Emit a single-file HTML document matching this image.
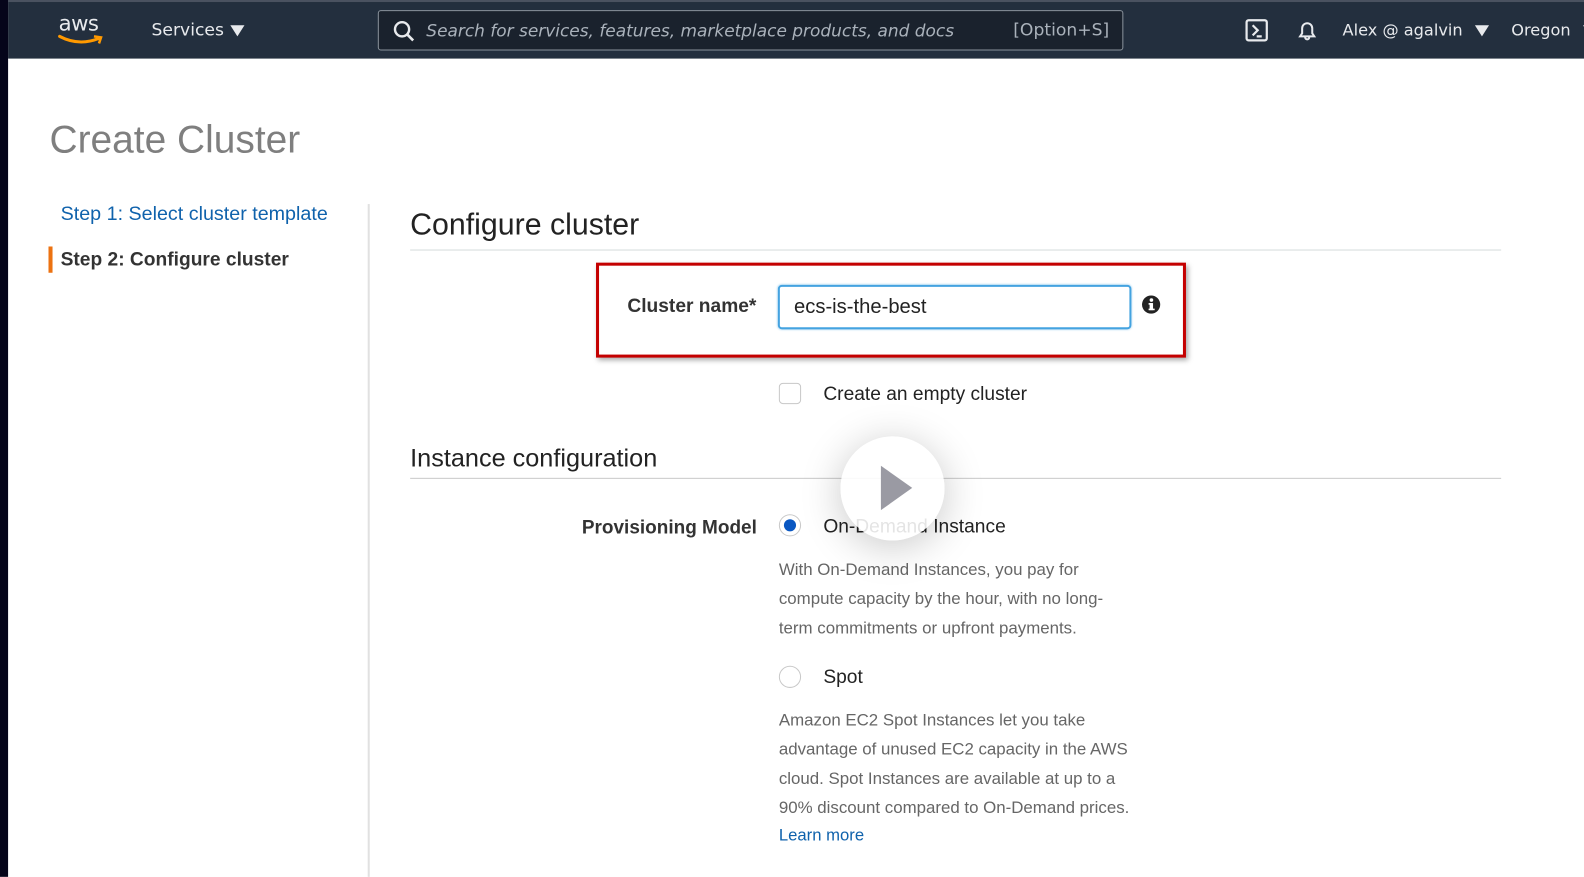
<!DOCTYPE html>
<html><head><meta charset="utf-8"><style>
*{margin:0;padding:0;box-sizing:border-box}
body{width:1584px;height:868px;overflow:hidden;background:#fff;font-family:"Liberation Sans",Arial,sans-serif;position:relative;color:#16191f}
#w{position:absolute;left:0;top:0;width:1568px;height:860px;transform:scale(1.0102);transform-origin:0 0}
.a{position:absolute;white-space:nowrap}
#strip{left:0;top:0;width:8px;height:868px;background:#05051a}
#hdr{left:8px;top:0;width:1576px;height:58px;background:#232f3e;border-top:2px solid #4a5260}
.hw{color:#e8eaed;font-family:"DejaVu Sans",sans-serif;font-size:17px}
.tri{display:inline-block;width:0;height:0;border-left:7px solid transparent;border-right:7px solid transparent;border-top:11px solid #e8eaed;vertical-align:middle;margin-left:6px}
.gray{color:#666;font-size:16.7px;line-height:29px}
.rule{height:1px;background:#d5dbdb}
</style></head><body><div id="w">
<div class="a" id="strip"></div>
<div class="a" id="hdr"></div>
<div class="a hw" style="left:58px;top:11px;font-size:21px;letter-spacing:-0.5px">aws</div>
<svg class="a" style="left:56px;top:33px" width="50" height="14"><path d="M3 3 Q22 13 42 5" stroke="#f90" stroke-width="3" fill="none" stroke-linecap="round"/><path d="M37 3 L44 4 L42 10" stroke="#f90" stroke-width="2.5" fill="none"/></svg>
<div class="a hw" style="left:150px;top:20px">Services<span class="tri"></span></div>
<div class="a" style="left:374px;top:10px;width:738px;height:40px;border:1px solid #8a939c;border-radius:3px;background:#1a222d"></div>
<svg class="a" style="left:389px;top:20px" width="22" height="22"><circle cx="9" cy="9" r="7" stroke="#e8eaed" stroke-width="2.4" fill="none"/><path d="M14 14 L20 20" stroke="#e8eaed" stroke-width="2.6"/></svg>
<div class="a hw" style="left:422px;top:20px;font-style:italic;color:#aab2bb;font-size:16.8px">Search for services, features, marketplace products, and docs</div>
<div class="a hw" style="left:1003px;top:20px;color:#aab2bb">[Option+S]</div>
<svg class="a" style="left:1232px;top:18px" width="24" height="24"><rect x="2" y="2" width="20" height="20" rx="2" stroke="#e8eaed" stroke-width="2.2" fill="none"/><path d="M8 7 L13 12 L8 17 M12 18 H17" stroke="#e8eaed" stroke-width="2.2" fill="none"/></svg>
<svg class="a" style="left:1282px;top:18px" width="24" height="24"><path d="M5 18 H19 L17 15 V10 A5 5 0 0 0 7 10 V15 Z M10 19 A2 2 0 0 0 14 19" stroke="#e8eaed" stroke-width="2" fill="none"/></svg>
<div class="a hw" style="left:1329px;top:20px;font-size:16px">Alex @ agalvin<span class="tri" style="margin-left:12px"></span></div>
<div class="a hw" style="left:1496px;top:20px;font-size:16px">Oregon<span class="tri" style="margin-left:12px"></span></div>

<div class="a" style="left:49px;top:117px;font-size:38.5px;color:#7f7f7f">Create Cluster</div>
<div class="a" style="left:60px;top:201px;font-size:19.5px;color:#0f62ac">Step 1: Select cluster template</div>
<div class="a" style="left:48px;top:244px;width:4px;height:26px;background:#ec7211"></div>
<div class="a" style="left:60px;top:247px;font-size:19px;font-weight:bold;color:#333">Step 2: Configure cluster</div>
<div class="a" style="left:364px;top:202px;width:2px;height:666px;background:#e1e1e1"></div>

<div class="a" style="left:406px;top:206px;font-size:30px;color:#222">Configure cluster</div>
<div class="a rule" style="left:406px;top:247px;width:1080px"></div>
<div class="a" style="left:590px;top:260px;width:584px;height:94px;border:3px solid #c40000;box-shadow:2px 3px 5px rgba(0,0,0,.35)"></div>
<div class="a" style="left:621px;top:293px;font-size:19px;font-weight:bold;color:#333">Cluster name*</div>
<div class="a" style="left:770px;top:282px;width:350px;height:44px;border:2px solid #44a3e0;border-radius:4px;box-shadow:0 0 2px #9ccff0"></div>
<div class="a" style="left:786px;top:293px;font-size:20px;color:#222">ecs-is-the-best</div>
<svg class="a" style="left:1130px;top:292px" width="19" height="19"><circle cx="9.5" cy="9.5" r="9" fill="#222"/><rect x="8" y="8" width="3.4" height="7" fill="#fff"/><rect x="7" y="8" width="3" height="1.6" fill="#fff"/><rect x="7" y="13.5" width="6" height="1.6" fill="#fff"/><circle cx="9.8" cy="5" r="1.8" fill="#fff"/></svg>
<div class="a" style="left:771px;top:379px;width:22px;height:21px;border:1.5px solid #c8c8c8;border-radius:4px"></div>
<div class="a" style="left:815px;top:380px;font-size:19px;color:#222">Create an empty cluster</div>

<div class="a" style="left:406px;top:440px;font-size:25px;color:#222">Instance configuration</div>
<div class="a rule" style="left:406px;top:473px;width:1080px;background:#c8c8c8"></div>
<div class="a" style="left:576px;top:511px;font-size:18.8px;font-weight:bold;color:#333">Provisioning Model</div>
<div class="a" style="left:771px;top:509px;width:22px;height:22px;border:1.5px solid #c8c8c8;border-radius:50%"></div>
<div class="a" style="left:776px;top:514px;width:12px;height:12px;background:#0a57c2;border-radius:50%"></div>
<div class="a" style="left:815px;top:511px;font-size:19px;color:#222">On-Demand Instance</div>
<div class="a gray" style="left:771px;top:549px">With On-Demand Instances, you pay for<br>compute capacity by the hour, with no long-<br>term commitments or upfront payments.</div>
<div class="a" style="left:771px;top:659px;width:22px;height:22px;border:1.5px solid #c8c8c8;border-radius:50%"></div>
<div class="a" style="left:815px;top:660px;font-size:19px;color:#222">Spot</div>
<div class="a gray" style="left:771px;top:698px">Amazon EC2 Spot Instances let you take<br>advantage of unused EC2 capacity in the AWS<br>cloud. Spot Instances are available at up to a<br>90% discount compared to On-Demand prices.</div>
<div class="a" style="left:771px;top:818px;font-size:16.5px;color:#0f62ac">Learn more</div>

<div class="a" style="left:832px;top:432px;width:103px;height:103px;border-radius:50%;background:rgba(255,255,255,.88);box-shadow:0 6px 40px rgba(0,0,0,.22)"></div>
<svg class="a" style="left:870px;top:459px" width="36" height="50"><path d="M2 2 L33 24 L2 46 Z" fill="#9a9aa3"/></svg>
</div></body></html>
